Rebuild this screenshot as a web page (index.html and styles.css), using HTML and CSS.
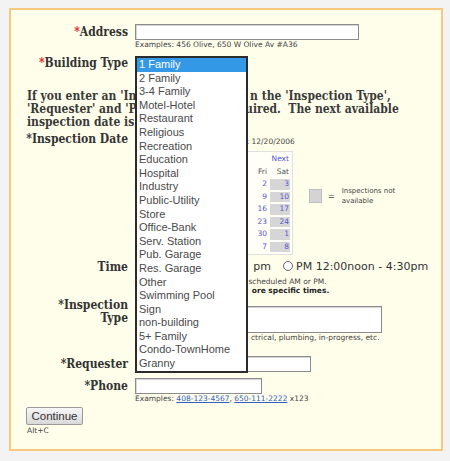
FILE: index.html
```html
<!DOCTYPE html>
<html>
<head>
<meta charset="utf-8">
<link rel="stylesheet" href="styles.css">
</head>
<body>
<div class="panel">
  <div class="row r-address">
    <label class="lbl"><span class="req">*</span>Address</label>
    <div class="field">
      <div class="inp w-addr"></div>
      <div class="hint">Examples: 456 Olive, 650 W Olive Av #A36</div>
    </div>
  </div>

  <div class="row r-btype">
    <label class="lbl"><span class="req">*</span>Building Type</label>
    <div class="field sel-wrap">
      <ul class="dropdown">
        <li class="sel">1 Family</li>
        <li>2 Family</li>
        <li>3-4 Family</li>
        <li>Motel-Hotel</li>
        <li>Restaurant</li>
        <li>Religious</li>
        <li>Recreation</li>
        <li>Education</li>
        <li>Hospital</li>
        <li>Industry</li>
        <li>Public-Utility</li>
        <li>Store</li>
        <li>Office-Bank</li>
        <li>Serv. Station</li>
        <li>Pub. Garage</li>
        <li>Res. Garage</li>
        <li>Other</li>
        <li>Swimming Pool</li>
        <li>Sign</li>
        <li>non-building</li>
        <li>5+ Family</li>
        <li>Condo-TownHome</li>
        <li>Granny</li>
      </ul>
    </div>
  </div>

  <p class="intro">If you enter an 'In<span class="under">spection Date', the</span>n the 'Inspection Type',<br>'Requester' and 'P<span class="under">hone' are also req</span>uired.&nbsp; The next available<br>inspection date is:<span class="under"> 12/20/2006</span></p>

  <div class="row r-date">
    <label class="lbl">*Inspection Date</label>
    <div class="field">
      <div class="hint date-hint"><span class="under">The currently selected date is</span>: 12/20/2006</div>
      <div class="cal-line">
        <table class="cal">
          <tr class="nav"><td class="under">Prev</td><td></td><td></td><td></td><td></td><td></td><td class="next">Next</td></tr>
          <tr class="hdr"><td class="under">Sun</td><td class="under">Mon</td><td class="under">Tue</td><td class="under">Wed</td><td class="under">Thu</td><td>Fri</td><td>Sat</td></tr>
          <tr><td class="under">27</td><td class="under">28</td><td class="under">29</td><td class="under">30</td><td class="under">1</td><td>2</td><td class="na">3</td></tr>
          <tr><td class="under">4</td><td class="under">5</td><td class="under">6</td><td class="under">7</td><td class="under">8</td><td>9</td><td class="na">10</td></tr>
          <tr><td class="under">11</td><td class="under">12</td><td class="under">13</td><td class="under">14</td><td class="under">15</td><td>16</td><td class="na">17</td></tr>
          <tr><td class="under">18</td><td class="under">19</td><td class="under">20</td><td class="under">21</td><td class="under">22</td><td>23</td><td class="na">24</td></tr>
          <tr><td class="under">25</td><td class="under">26</td><td class="under">27</td><td class="under">28</td><td class="under">29</td><td>30</td><td class="na">1</td></tr>
          <tr><td class="under">2</td><td class="under">3</td><td class="under">4</td><td class="under">5</td><td class="under">6</td><td>7</td><td class="na">8</td></tr>
        </table>
        <div class="legend">
          <span class="swatch"></span>
          <span class="eq">=</span>
          <span class="legend-text">Inspections not<br>available</span>
        </div>
      </div>
    </div>
  </div>

  <div class="row r-time">
    <label class="lbl">Time</label>
    <div class="field time-opts">
      <span class="opt"><span class="radio"></span><span class="under">AM 8:00am - 12:00</span>pm</span>
      <span class="opt"><span class="radio"></span>PM 12:00noon - 4:30pm</span>
    </div>
  </div>
  <div class="row r-notes">
    <div class="lbl-space"></div>
    <div class="field">
      <div class="hint"><span class="under">Note: inspections can only be </span>scheduled AM or PM.</div>
      <div class="hint strong"><span class="under">Contact the inspector for m</span>ore specific times.</div>
    </div>
  </div>

  <div class="row r-type">
    <label class="lbl lbl-2">*Inspection<br>Type</label>
    <div class="field type-field">
      <div class="inp w-area"></div>
      <div class="hint"><span class="under">Examples: foundation, gas, ele</span>ctrical, plumbing, in-progress, etc.</div>
    </div>
  </div>

  <div class="row r-req">
    <label class="lbl">*Requester</label>
    <div class="field"><div class="inp w-req"></div></div>
  </div>

  <div class="row r-phone">
    <label class="lbl">*Phone</label>
    <div class="field">
      <div class="inp w-phone"></div>
      <div class="hint">Examples: <a href="#">408-123-4567</a>, <a href="#">650-111-2222</a> x123</div>
    </div>
  </div>

  <div class="actions">
    <button class="btn">Continue</button>
    <div class="hint">Alt+C</div>
  </div>
</div>
</body>
</html>
```

FILE: styles.css
```css
html, body {
  margin: 0;
  padding: 0;
}
body {
  background: #f3f3f3;
  width: 450px;
  height: 461px;
  overflow: hidden;
  font-family: "DejaVu Sans", sans-serif;
  color: #333;
}
.panel {
  box-sizing: border-box;
  margin: 8px 0 0 9px;
  width: 434px;
  height: 443px;
  border: 2px solid #f8c87d;
  background: #fffeeb;
  padding-top: 14px;
}
.under { visibility: hidden; }
.row {
  display: flex;
  align-items: flex-start;
}
.lbl, .lbl-space {
  box-sizing: border-box;
  flex: none;
  width: 124px;
  padding-right: 7px;
  text-align: right;
  font-family: "DejaVu Serif Condensed", "DejaVu Serif", serif;
  font-stretch: condensed;
  font-weight: bold;
  font-size: 12px;
  line-height: 16px;
  color: #333;
}
.req { color: #e0202a; }
.field { flex: none; }
.inp {
  box-sizing: border-box;
  height: 16px;
  background: #fff;
  border: 1px solid #8c8c8c;
  box-shadow: inset 1px 1px 0 #d6d6d6;
}
.w-addr { width: 224px; }
.w-area { width: 247px; height: 27px; }
.w-req { width: 176px; }
.w-phone { width: 127px; }
.hint {
  font-size: 7.5px;
  line-height: 9px;
  color: #444;
  white-space: nowrap;
}
.hint.strong { font-weight: bold; color: #222; }
.hint a { color: #2f5fc0; }

.r-btype { margin-top: 7px; }
.r-btype .lbl { line-height: 14px; }
.sel-wrap { position: relative; height: 14px; width: 113px; }
.dropdown {
  position: absolute;
  top: 0;
  left: 0;
  z-index: 5;
  box-sizing: border-box;
  width: 113px;
  margin: 0;
  padding: 0;
  list-style: none;
  background: #fff;
  border: 2px solid #2b2b2b;
  font-family: "Liberation Sans", Arial, sans-serif;
  font-size: 11px;
  color: #4a4a4a;
}
.dropdown li {
  height: 13.6px;
  line-height: 13.6px;
  padding-left: 2px;
  white-space: nowrap;
}
.dropdown li.sel { background: #3399e6; color: #fff; }

.intro {
  margin: 19.5px 0 0 16px;
  font-family: "DejaVu Serif Condensed", "DejaVu Serif", serif;
  font-stretch: condensed;
  font-weight: bold;
  font-size: 12px;
  line-height: 13px;
  color: #3a3a3a;
  white-space: nowrap;
}

.r-date { margin-top: 3.5px; }
.r-date .lbl { line-height: 14px; }
.date-hint { padding-top: 5px; }
.cal-line { display: flex; align-items: flex-start; margin-top: 5px; }
.cal {
  border: 1px solid #e0e0e0;
  border-spacing: 2px;
  background: #fffff8;
  font-size: 7.5px;
  color: #5656d2;
}
.cal td {
  width: 19px;
  padding: 0 1px 0 0;
  text-align: right;
  height: 10.5px;
  line-height: 10.5px;
}
.cal tr.nav td { height: 10px; line-height: 10px; }
.cal tr.hdr td { height: 11px; line-height: 11px; color: #555; }
.cal td.na { background: #d6d6d6; }
.legend {
  display: flex;
  align-items: center;
  margin: 35px 0 0 16px;
}
.swatch {
  box-sizing: border-box;
  width: 13px;
  height: 14px;
  background: #d4d4d4;
  border: 1px solid #bdbdbd;
}
.eq { font-size: 8px; margin: 0 7px 0 6px; color: #444; }
.legend-text { font-size: 7px; line-height: 10px; color: #444; }

.r-time { margin-top: 5px; }
.r-time .lbl { line-height: 14px; }
.time-opts {
  font-size: 11px;
  line-height: 14px;
  color: #333;
  white-space: nowrap;
  display: flex;
  gap: 12px;
}
.radio {
  display: inline-block;
  box-sizing: border-box;
  width: 10px;
  height: 10px;
  border: 1px solid #666;
  border-radius: 50%;
  background: #fff;
  vertical-align: -1px;
  margin-right: 3px;
}
.r-notes { margin-top: 2.5px; }
.r-notes .lbl-space { line-height: 9px; }

.r-type { margin-top: 4.5px; }
.lbl-2 { line-height: 13px; }
.type-field { padding-top: 7px; }

.r-req { margin-top: 13.5px; }
.r-phone { margin-top: 6px; }

.actions { margin: 4.5px 0 0 15px; }
.btn {
  display: block;
  box-sizing: border-box;
  width: 57px;
  height: 18px;
  padding: 0;
  font-family: "Liberation Sans", Arial, sans-serif;
  font-size: 11.5px;
  color: #333;
  border: 1px solid #9a9a9a;
  border-radius: 2px;
  background: linear-gradient(#f7f7f7, #d9d9d9);
}
.actions .hint { margin-top: 0.5px; padding-left: 1px; }
```
